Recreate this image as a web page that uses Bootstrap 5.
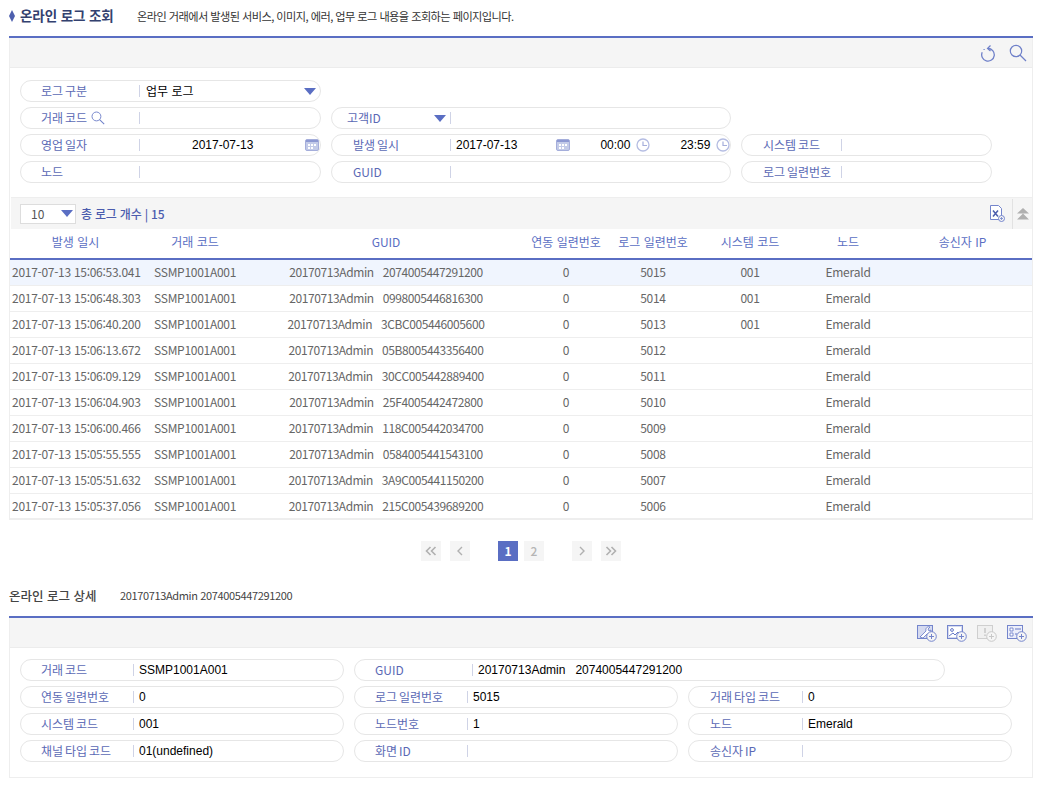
<!DOCTYPE html>
<html lang="ko">
<head>
<meta charset="utf-8">
<title>온라인 로그 조회</title>
<link href="https://cdn.jsdelivr.net/npm/bootstrap@5.3.0/dist/css/bootstrap.min.css" rel="stylesheet">
<style>
html,body{background:#fff;}
body{font-family:"Noto Sans CJK KR","Noto Sans",sans-serif;font-size:12px;color:#666;padding:0 14px 0 9px;overflow:hidden;}
.page-head{height:38px;border-bottom:2px solid #5a6ec3;padding-bottom:5px;}
.page-title{font-size:13.5px;font-weight:700;color:#33416f;margin:0;width:128px;letter-spacing:-.1px;gap:5px;}
.page-desc{font-size:11.2px;color:#333;letter-spacing:-.56px;padding-top:2px;}
.tool{height:30px;background:#f5f5f5;border-bottom:1px solid #ececec;padding-right:5px;}
.tool-a{gap:13px}.tool-b{gap:10px}
.panel{border:1px solid #eee;border-width:0 1px;}
.form-area{padding:12px 10px 9px;}
.pill-row{gap:10px;margin-bottom:5px;height:22px;}
.pill{height:22px;border:1px solid #e6e6e6;border-radius:11px;background:#fff;}
.w301{width:301px}.w400{width:400px}.w251{width:251px}.w324{width:324px}.w591{width:591px}
.lab{color:#5b69b5;padding-left:20px;flex:none;white-space:nowrap;height:12px;line-height:12px;border-right:1px solid #cfd3e6;word-spacing:-1.5px;}
.lab-a{width:119px}.lab-b{width:119px;padding-left:15px}.lab-f{width:119px;padding-left:21px}.lab-s{width:100px;padding-left:21px}
.lab-d{width:113px}.lab-e{width:113px;padding-left:20px}.lab-g{width:118px;padding-left:20px}.lab-h{width:114px;padding-left:21px}
.val{font-family:"Liberation Sans",Arial,sans-serif;color:#000;padding-left:6px;white-space:pre;line-height:20px;}
.val-k{font-family:"Noto Sans CJK KR",sans-serif;}
.val-h{padding-left:5px}
.tri{width:0;height:0;border-left:6px solid transparent;border-right:6px solid transparent;border-top:7px solid #5a6ec3;flex:none;}
.grid-bar{height:32px;background:#f5f5f5;border:solid #eee;border-width:1px 0 0 0;padding:0 2px 0 9px;margin-left:1px;}
.sel-size{width:56px;height:20px;background:#fff;border:1px solid #ddd;color:#555;padding:0 2px 0 10px;}
.total{color:#4b5cae;font-weight:500;margin-left:5px;letter-spacing:-.2px;}
.vsep{height:30px;border-left:1px solid #e2e2e2;padding-left:3px;margin-left:7px;}
.log-table{table-layout:fixed;margin:0;width:100%;font-size:12px;border-bottom:2px solid #eee;}
.log-table th{height:30px;padding:0 0 3px;font-weight:400;color:#5a6ec3;text-align:center;border-bottom:2px solid #5a6ec3;vertical-align:middle;}
.log-table td{height:26px;padding:0;text-align:center;color:#666;border-bottom:1px solid #eee;vertical-align:middle;white-space:pre;letter-spacing:-.28px;font-kerning:none;font-variant-ligatures:no-contextual;font-feature-settings:"calt" 0;}
.log-table td:nth-child(3){letter-spacing:-.4px;}
.log-table .sel>td{--bs-table-bg:#f0f5fe;}
.log-table td:first-child{text-align:left;padding-left:2px;}
.c1{width:131px}.c2{width:108px}.c3{width:274px}.c4{width:86px}.c5{width:88px}.c6{width:106px}.c7{width:90px}
.pager{margin:21px 0 20px;gap:9px;height:20px;}
.pg{width:20px;height:20px;background:#f5f5f5;color:#b5b5b5;font-size:12px;font-weight:500;border:0;padding:0;line-height:20px;}
.pg.on{background:#5a6ec3;color:#fff;font-weight:700;}
.pg-gap{margin-left:19px}.pg2{margin-left:-3px}
.detail-head{height:37px;border-bottom:2px solid #5a6ec3;padding-bottom:7px;}
.detail-title{font-size:12.5px;font-weight:500;color:#444;margin:0;width:111px;}
.detail-sub{font-size:11px;color:#444;letter-spacing:-.36px;}
.panel-b{border-bottom:1px solid #eee;}
.form-b{padding:11px 10px 10px;}
svg{display:block;flex:none;}
.date1{margin-left:52px;width:61px;padding-left:0}
.cal1{margin-left:52px}
.date2{padding-left:5px}
.cal2{margin-left:39px}
.t1{margin-left:30px;padding-left:0}
.ck1{margin-left:6px}
.t2{margin-left:30px;padding-left:0}
.ck2{margin-left:6px}
</style>
</head>
<body>
<svg width="0" height="0" class="position-absolute">
<symbol id="cal" viewBox="0 0 14 12"><rect x=".5" y=".5" width="13" height="11" rx="1.5" fill="#c3cbe8" stroke="#a5aedb"/><rect x="1" y="1" width="12" height="2" fill="#8d99d2"/><path d="M3 5h2v2H3zM6 5h2v2H6zM9 5h2v2H9zM3 8h2v2H3zM6 8h2v2H6z" fill="#fff"/></symbol>
<symbol id="clk" viewBox="0 0 14 14"><circle cx="7" cy="7" r="6" fill="none" stroke="#b4bce2" stroke-width="1.3"/><path d="M7 3.5V7.5H11" fill="none" stroke="#a5aedb" stroke-width="1.2"/></symbol>
<symbol id="sch" viewBox="0 0 18 18"><circle cx="7" cy="7" r="5.7" fill="none" stroke="#6f80c9" stroke-width="1.2"/><path d="M11 11l6 6" stroke="#6f80c9" stroke-width="1.3"/></symbol>
<symbol id="plus" viewBox="0 0 11 11"><circle cx="5.5" cy="5.5" r="4.8" fill="#f5f5f5" stroke="currentColor"/><path d="M5.5 3v5M3 5.500h5" stroke="currentColor"/></symbol>
</svg>

<div class="page-head d-flex align-items-center">
  <h1 class="page-title d-flex align-items-center"><svg width="6" height="12" viewBox="0 0 6 12"><path d="M3 0l3 6-3 6-3-6z" fill="#4d5fae"/></svg>온라인 로그 조회</h1>
  <span class="page-desc">온라인 거래에서 발생된 서비스, 이미지, 에러, 업무 로그 내용을 조회하는 페이지입니다.</span>
</div>

<div class="panel">
  <div class="tool tool-a d-flex align-items-center justify-content-end">
    <svg width="16" height="18" viewBox="0 0 16 18"><path d="M8 4.500A6.300 6.300 0 1 1 2.200 8.300" fill="none" stroke="#6f80c9" stroke-width="1.300"/><path d="M10.500 1.500L7.500 4.500l3 2.500" fill="none" stroke="#6f80c9" stroke-width="1.200"/><path d="M3.500 5.500h1.200" stroke="#6f80c9" stroke-width="1.200"/></svg>
    <svg width="18" height="18"><use href="#sch"/></svg>
  </div>
  <div class="form-area">
    <div class="pill-row d-flex">
      <div class="pill w301 d-flex align-items-center"><span class="lab lab-a">로그 구분</span><span class="val val-k flex-grow-1">업무 로그</span><span class="tri me-1"></span></div>
    </div>
    <div class="pill-row d-flex">
      <div class="pill w301 d-flex align-items-center"><span class="lab lab-a d-flex align-items-center gap-1">거래 코드<svg width="14" height="14"><use href="#sch"/></svg></span></div>
      <div class="pill w400 d-flex align-items-center"><span class="lab lab-b d-flex align-items-center justify-content-between pe-1">고객ID<span class="tri"></span></span></div>
    </div>
    <div class="pill-row d-flex">
      <div class="pill w301 d-flex align-items-center"><span class="lab lab-a">영업 일자</span><span class="val date1">2017-07-13</span><svg class="cal1" width="14" height="12"><use href="#cal"/></svg></div>
      <div class="pill w400 d-flex align-items-center"><span class="lab lab-f">발생 일시</span><span class="val date2">2017-07-13</span><svg class="cal2" width="14" height="12"><use href="#cal"/></svg><span class="val t1">00:00</span><svg class="ck1" width="14" height="14"><use href="#clk"/></svg><span class="val t2">23:59</span><svg class="ck2" width="14" height="14"><use href="#clk"/></svg></div>
      <div class="pill w251 d-flex align-items-center"><span class="lab lab-s">시스템 코드</span></div>
    </div>
    <div class="pill-row d-flex">
      <div class="pill w301 d-flex align-items-center"><span class="lab lab-a">노드</span></div>
      <div class="pill w400 d-flex align-items-center"><span class="lab lab-f">GUID</span></div>
      <div class="pill w251 d-flex align-items-center"><span class="lab lab-s">로그 일련번호</span></div>
    </div>
  </div>

  <div class="grid-bar d-flex align-items-center">
    <div class="sel-size d-flex align-items-center justify-content-between">10<span class="tri"></span></div>
    <span class="total">총 로그 개수 | 15</span>
    <span class="ms-auto"></span>
    <svg width="16" height="17" viewBox="0 0 16 17"><path d="M1.500 .5h8l3 3v11h-11z" fill="#fff" stroke="#7485cc"/><path d="M4 5.500l5 6M9 5.500l-5 6" stroke="#4d5fae" stroke-width="1.500"/><circle cx="12.500" cy="13.500" r="3" fill="#f5f5f5" stroke="#7485cc"/><path d="M11 13.500h3M12.500 12v3" stroke="#7485cc" stroke-width=".8"/></svg>
    <div class="vsep d-flex align-items-center"><svg width="14" height="12" viewBox="0 0 14 12"><path d="M7 0l6 5.500H1zM7 5.500l6 6H1z" fill="#b0b0b0"/></svg></div>
  </div>

  <table class="table log-table">
    <colgroup><col class="c1"><col class="c2"><col class="c3"><col class="c4"><col class="c5"><col class="c6"><col class="c7"><col></colgroup>
    <thead><tr><th>발생 일시</th><th>거래 코드</th><th>GUID</th><th>연동 일련번호</th><th>로그 일련번호</th><th>시스템 코드</th><th>노드</th><th>송신자 IP</th></tr></thead>
    <tbody>
      <tr class="sel"><td>2017-07-13 15:06:53.041</td><td>SSMP1001A001</td><td>20170713Admin   2074005447291200</td><td>0</td><td>5015</td><td>001</td><td>Emerald</td><td></td></tr>
      <tr><td>2017-07-13 15:06:48.303</td><td>SSMP1001A001</td><td>20170713Admin   0998005446816300</td><td>0</td><td>5014</td><td>001</td><td>Emerald</td><td></td></tr>
      <tr><td>2017-07-13 15:06:40.200</td><td>SSMP1001A001</td><td>20170713Admin   3CBC005446005600</td><td>0</td><td>5013</td><td>001</td><td>Emerald</td><td></td></tr>
      <tr><td>2017-07-13 15:06:13.672</td><td>SSMP1001A001</td><td>20170713Admin   05B8005443356400</td><td>0</td><td>5012</td><td></td><td>Emerald</td><td></td></tr>
      <tr><td>2017-07-13 15:06:09.129</td><td>SSMP1001A001</td><td>20170713Admin   30CC005442889400</td><td>0</td><td>5011</td><td></td><td>Emerald</td><td></td></tr>
      <tr><td>2017-07-13 15:06:04.903</td><td>SSMP1001A001</td><td>20170713Admin   25F4005442472800</td><td>0</td><td>5010</td><td></td><td>Emerald</td><td></td></tr>
      <tr><td>2017-07-13 15:06:00.466</td><td>SSMP1001A001</td><td>20170713Admin   118C005442034700</td><td>0</td><td>5009</td><td></td><td>Emerald</td><td></td></tr>
      <tr><td>2017-07-13 15:05:55.555</td><td>SSMP1001A001</td><td>20170713Admin   0584005441543100</td><td>0</td><td>5008</td><td></td><td>Emerald</td><td></td></tr>
      <tr><td>2017-07-13 15:05:51.632</td><td>SSMP1001A001</td><td>20170713Admin   3A9C005441150200</td><td>0</td><td>5007</td><td></td><td>Emerald</td><td></td></tr>
      <tr><td>2017-07-13 15:05:37.056</td><td>SSMP1001A001</td><td>20170713Admin   215C005439689200</td><td>0</td><td>5006</td><td></td><td>Emerald</td><td></td></tr>
    </tbody>
  </table>
</div>

<div class="pager d-flex justify-content-center">
  <button class="pg btn rounded-0"><svg class="mx-auto" width="12" height="10" viewBox="0 0 12 10"><path d="M5.500 1L1.500 5l4 4M10.500 1l-4 4 4 4" fill="none" stroke="#b0b0b0" stroke-width="1.600"/></svg></button>
  <button class="pg btn rounded-0"><svg class="mx-auto" width="8" height="10" viewBox="0 0 8 10"><path d="M6 1L2 5l4 4" fill="none" stroke="#b0b0b0" stroke-width="1.400"/></svg></button>
  <button class="pg on btn rounded-0 pg-gap">1</button>
  <button class="pg btn rounded-0 pg2">2</button>
  <button class="pg btn rounded-0 pg-gap"><svg class="mx-auto" width="8" height="10" viewBox="0 0 8 10"><path d="M2 1l4 4-4 4" fill="none" stroke="#b0b0b0" stroke-width="1.400"/></svg></button>
  <button class="pg btn rounded-0"><svg class="mx-auto" width="12" height="10" viewBox="0 0 12 10"><path d="M1.500 1l4 4-4 4M6.500 1l4 4-4 4" fill="none" stroke="#b0b0b0" stroke-width="1.600"/></svg></button>
</div>

<div class="detail-head d-flex align-items-center">
  <h2 class="detail-title">온라인 로그 상세</h2>
  <span class="detail-sub">20170713Admin 2074005447291200</span>
</div>
<div class="panel panel-b">
  <div class="tool tool-b d-flex align-items-center justify-content-end">
    <svg width="20" height="18" viewBox="0 0 20 18" color="#7485cc"><rect x=".5" y="1.500" width="15" height="13" fill="#d5daf0" stroke="#7485cc"/><path d="M3 13l6-6c-1-3 2-5 4-4l-2 2 1 2 2-1c.5 3-2 4.500-4 4l-4 4z" fill="#fff" stroke="#6577c5" stroke-width=".8"/><use href="#plus" x="9" y="7" width="11" height="11"/></svg>
    <svg width="20" height="18" viewBox="0 0 20 18" color="#7485cc"><rect x=".5" y="1.500" width="15" height="13" fill="#d5daf0" stroke="#7485cc"/><rect x="2" y="3" width="12" height="10" fill="#fff"/><circle cx="5" cy="6" r="1.400" fill="none" stroke="#6577c5"/><path d="M2 12l4-3 2 2 3-3 3 3" fill="none" stroke="#6577c5"/><use href="#plus" x="9" y="7" width="11" height="11"/></svg>
    <svg width="20" height="18" viewBox="0 0 20 18" color="#c8c8c8"><rect x=".5" y="1.500" width="15" height="13" fill="#f0f0f0" stroke="#cfcfcf"/><path d="M8 4v5M8 10.500v1.500" stroke="#bdbdbd" stroke-width="1.200"/><use href="#plus" x="9" y="7" width="11" height="11"/></svg>
    <svg width="20" height="18" viewBox="0 0 20 18" color="#7485cc"><rect x=".5" y="1.500" width="15" height="13" fill="#eceefa" stroke="#7485cc"/><path d="M3 4h3v3H3zM3 9h3v3H3z" fill="#fff" stroke="#6577c5" stroke-width=".8"/><path d="M8 5h6M8 10h2" stroke="#6577c5"/><use href="#plus" x="9" y="7" width="11" height="11"/></svg>
  </div>
  <div class="form-b">
    <div class="pill-row d-flex">
      <div class="pill w324 d-flex align-items-center"><span class="lab lab-d">거래 코드</span><span class="val val-h">SSMP1001A001</span></div>
      <div class="pill w591 d-flex align-items-center"><span class="lab lab-g">GUID</span><span class="val val-h">20170713Admin   2074005447291200</span></div>
    </div>
    <div class="pill-row d-flex">
      <div class="pill w324 d-flex align-items-center"><span class="lab lab-d">연동 일련번호</span><span class="val val-h">0</span></div>
      <div class="pill w324 d-flex align-items-center"><span class="lab lab-e">로그 일련번호</span><span class="val val-h">5015</span></div>
      <div class="pill w324 d-flex align-items-center"><span class="lab lab-h">거래 타입 코드</span><span class="val val-h">0</span></div>
    </div>
    <div class="pill-row d-flex">
      <div class="pill w324 d-flex align-items-center"><span class="lab lab-d">시스템 코드</span><span class="val val-h">001</span></div>
      <div class="pill w324 d-flex align-items-center"><span class="lab lab-e">노드번호</span><span class="val val-h">1</span></div>
      <div class="pill w324 d-flex align-items-center"><span class="lab lab-h">노드</span><span class="val val-h">Emerald</span></div>
    </div>
    <div class="pill-row d-flex">
      <div class="pill w324 d-flex align-items-center"><span class="lab lab-d">채널 타입 코드</span><span class="val val-h">01(undefined)</span></div>
      <div class="pill w324 d-flex align-items-center"><span class="lab lab-e">화면 ID</span></div>
      <div class="pill w324 d-flex align-items-center"><span class="lab lab-h">송신자 IP</span></div>
    </div>
  </div>
</div>
<script src="https://cdn.jsdelivr.net/npm/bootstrap@5.3.0/dist/js/bootstrap.bundle.min.js"></script>
</body>
</html>
